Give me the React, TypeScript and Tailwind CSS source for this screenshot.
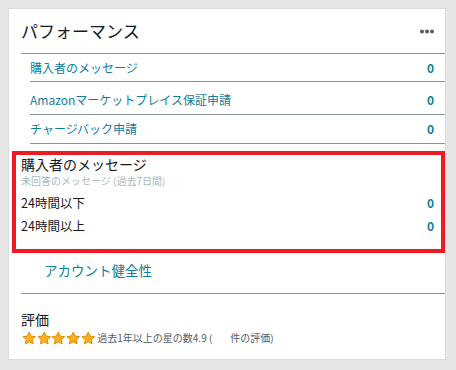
import React from "react";

const font = { fontFamily: '"Noto Sans CJK JP", "Noto Sans", sans-serif' };

type LinkRow = { label: string; value: number; height: string };

const rows: LinkRow[] = [
  { label: "購入者のメッセージ", value: 0, height: "h-[28px]" },
  { label: "Amazonマーケットプレイス保証申請", value: 0, height: "h-[33px] pt-[4px]" },
  { label: "チャージバック申請", value: 0, height: "h-[29px]" },
];

function Star() {
  return (
    <svg width="14.5" height="14.5" viewBox="0 0 24 24">
      <path
        d="M12 1.8l3.1 6.6 7.2.9-5.3 5 1.4 7.1L12 17.9l-6.4 3.5L7 14.3l-5.3-5 7.2-.9z"
        fill="#ffb020"
        stroke="#e28a00"
        strokeWidth="1.6"
        strokeLinejoin="round"
      />
    </svg>
  );
}

function Dots() {
  return (
    <svg width="14" height="5" viewBox="0 0 14 5">
      <circle cx="2" cy="2.5" r="2" fill="#545b64" />
      <circle cx="7" cy="2.5" r="2" fill="#545b64" />
      <circle cx="12" cy="2.5" r="2" fill="#545b64" />
    </svg>
  );
}

export default function App() {
  return (
    <div className="min-h-[370px] w-[456px] bg-[#e6e6e6] pt-[8px] pl-[8px]" style={font}>
      <div className="flex h-[352px] w-[438px] flex-col border border-[#d9dcdc] bg-white pl-[12px]">
        {/* header */}
        <div className="flex h-[45px] items-center justify-between border-b border-[#879596] pr-[11px]">
          <span className="text-[17px] leading-[22px] text-[#16191f]">パフォーマンス</span>
          <Dots />
        </div>

        {rows.map((r) => (
          <div
            key={r.label}
            className={`ml-[9px] flex items-center justify-between border-b border-[#879596] pr-[11px] ${r.height}`}
          >
            <span className="text-[12px] leading-[16px] text-[#0f7e9b]">{r.label}</span>
            <span className="text-[12px] font-bold leading-[16px] text-[#0f7e9b]">{r.value}</span>
          </div>
        ))}

        {/* highlighted section */}
        <div className="-ml-[9px] mt-[7px] h-[102px] border-4 border-[#ed1c24] pl-[5px] pr-[7px]">
          <div className="text-[14px] leading-[18px] text-[#16191f]">購入者のメッセージ</div>
          <div className="mt-[1px] text-[10px] leading-[14px] text-[#aab7b8]">未回答のメッセージ (過去7日間)</div>
          <div className="mt-[6px] flex items-center justify-between leading-[18px]">
            <span className="text-[12.5px] text-[#16191f]">24時間以下</span>
            <span className="text-[12px] font-bold text-[#0f7e9b]">0</span>
          </div>
          <div className="mt-[5px] flex items-center justify-between leading-[18px]">
            <span className="text-[12.5px] text-[#16191f]">24時間以上</span>
            <span className="text-[12px] font-bold text-[#0f7e9b]">0</span>
          </div>
        </div>

        {/* account health */}
        <div className="h-[41px] border-b border-[#879596] pl-[23px] pt-[4px]">
          <span className="text-[13.5px] leading-[20px] text-[#0f7e9b]">アカウント健全性</span>
        </div>

        {/* rating */}
        <div className="pt-[16px]">
          <div className="text-[14px] leading-[18px] text-[#16191f]">評価</div>
          <div className="mt-[2px] flex items-center gap-[2px] pl-[1px]">
            <div className="flex gap-[0.2px]">
              <Star />
              <Star />
              <Star />
              <Star />
              <Star />
            </div>
            <span className="whitespace-pre text-[10px] leading-[16px] text-[#545b64]">
              過去1年以上の星の数4.9 (        件の評価)
            </span>
          </div>
        </div>
      </div>
    </div>
  );
}
